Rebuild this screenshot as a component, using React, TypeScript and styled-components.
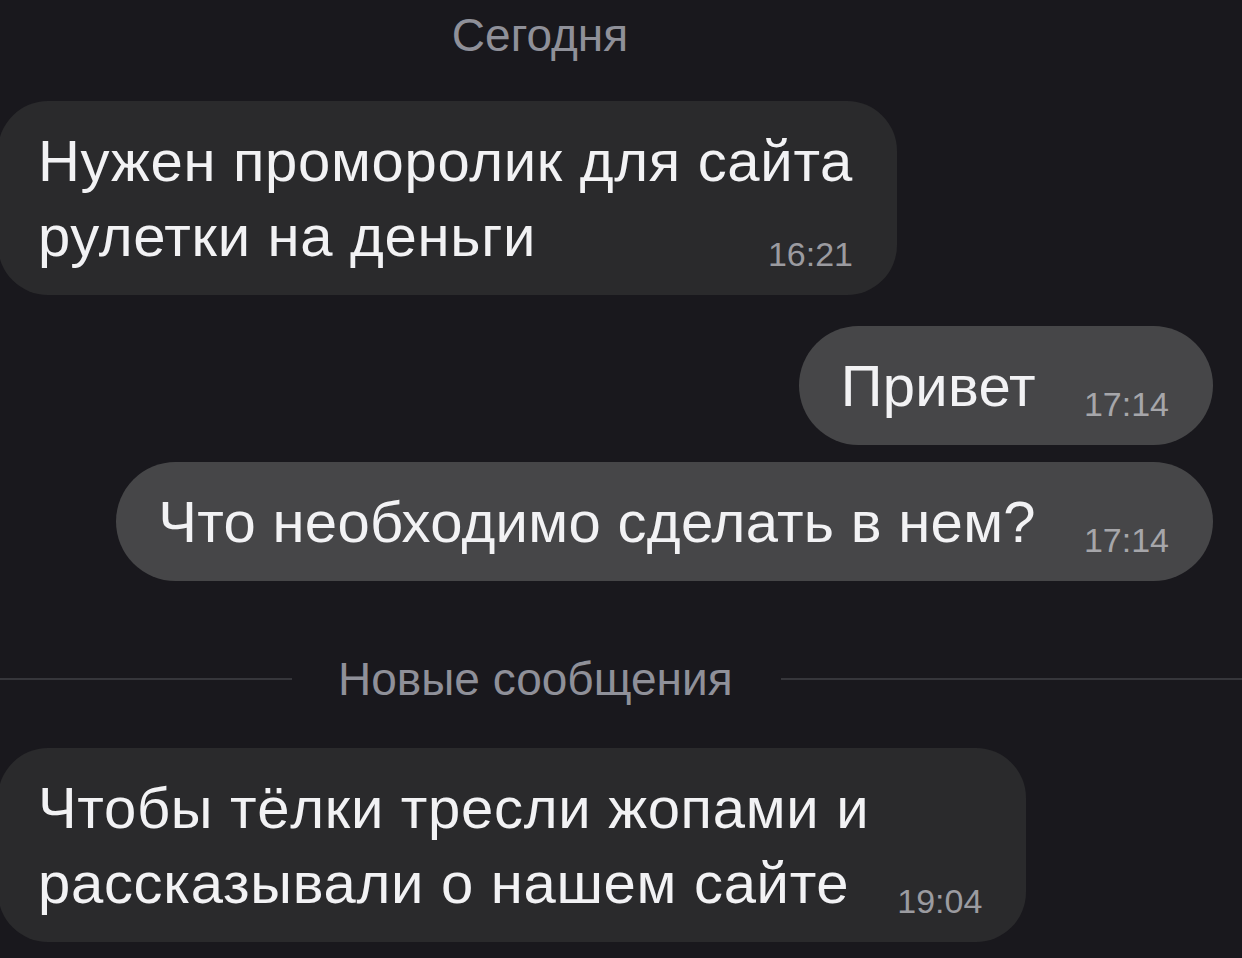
import React from 'react'
import styled, {createGlobalStyle} from 'styled-components'

interface IMessage {
    id: number
    lines: string[]
    time: string
    out?: boolean
    gapTop: number
}

const GlobalStyle = createGlobalStyle`
    html, body {
        margin: 0;
        padding: 0;
        background: #19181d;
    }
    body {
        font-family: 'Liberation Sans', Arial, sans-serif;
        -webkit-font-smoothing: antialiased;
    }
`

const Screen = styled.div`
    width: 1242px;
    height: 958px;
    overflow: hidden;
    background: #19181d;
    display: flex;
    flex-direction: column;
`

const DateHeader = styled.div`
    width: 1080px;
    padding-top: 12px;
    text-align: center;
    font-size: 46px;
    line-height: 46px;
    color: #8f9099;
`

const Row = styled.div<{ $out?: boolean; $gapTop: number }>`
    display: flex;
    justify-content: ${({$out}) => ($out ? 'flex-end' : 'flex-start')};
    margin-top: ${({$gapTop}) => $gapTop}px;
    padding-right: ${({$out}) => ($out ? '29px' : '0')};
    margin-left: ${({$out}) => ($out ? '0' : '-2px')};
`

const Bubble = styled.div<{ $out?: boolean; $multi?: boolean }>`
    display: flex;
    flex-direction: column;
    padding: 22px 44px 22px ${({$out}) => ($out ? '42px' : '40px')};
    border-radius: ${({$multi}) => ($multi ? '50px' : '60px')};
    background: ${({$out}) => ($out ? '#464648' : '#2a2a2c')};
    color: #f2f2f4;
`

const Line = styled.div<{ $out?: boolean }>`
    font-size: 58px;
    line-height: 75px;
    letter-spacing: ${({$out}) => ($out ? '0.3px' : '0.7px')};
    white-space: nowrap;
`

const LastLine = styled.div`
    display: flex;
    justify-content: space-between;
    align-items: flex-end;
`

const Time = styled.span<{ $out?: boolean }>`
    margin-left: 48px;
    margin-bottom: 2px;
    font-size: 34px;
    line-height: 34px;
    color: ${({$out}) => ($out ? '#a6a6aa' : '#9b9ba0')};
    white-space: nowrap;
`

const Divider = styled.div`
    display: flex;
    align-items: center;
    margin-top: 75px;
`

const DividerLine = styled.div<{ $width?: number }>`
    height: 2px;
    background: #36363b;
    ${({$width}) => ($width ? `width: ${$width}px; flex: none;` : 'flex: 1;')}
`

const DividerText = styled.span`
    margin: 0 48px 0 46px;
    font-size: 46px;
    line-height: 46px;
    color: #8f9099;
    white-space: nowrap;
`

const before: IMessage[] = [
    {id: 1, lines: ['Нужен проморолик для сайта', 'рулетки на деньги'], time: '16:21', gapTop: 43},
    {id: 2, lines: ['Привет'], time: '17:14', out: true, gapTop: 31},
    {id: 3, lines: ['Что необходимо сделать в нем?'], time: '17:14', out: true, gapTop: 17},
]

const after: IMessage[] = [
    {id: 4, lines: ['Чтобы тёлки тресли жопами и', 'рассказывали о нашем сайте'], time: '19:04', gapTop: 46},
]

const Message: React.FC<{ msg: IMessage }> = ({msg}) => {
    const head = msg.lines.slice(0, -1)
    const last = msg.lines[msg.lines.length - 1]
    return (
        <Row $out={msg.out} $gapTop={msg.gapTop}>
            <Bubble $out={msg.out} $multi={msg.lines.length > 1}>
                {head.map((l) => (
                    <Line key={l} $out={msg.out}>{l}</Line>
                ))}
                <LastLine>
                    <Line $out={msg.out}>{last}</Line>
                    <Time $out={msg.out}>{msg.time}</Time>
                </LastLine>
            </Bubble>
        </Row>
    )
}

const App: React.FC = () => (
    <Screen>
        <GlobalStyle/>
        <DateHeader>Сегодня</DateHeader>
        {before.map((m) => (
            <Message key={m.id} msg={m}/>
        ))}
        <Divider>
            <DividerLine $width={292}/>
            <DividerText>Новые сообщения</DividerText>
            <DividerLine/>
        </Divider>
        {after.map((m) => (
            <Message key={m.id} msg={m}/>
        ))}
    </Screen>
)

export default App
